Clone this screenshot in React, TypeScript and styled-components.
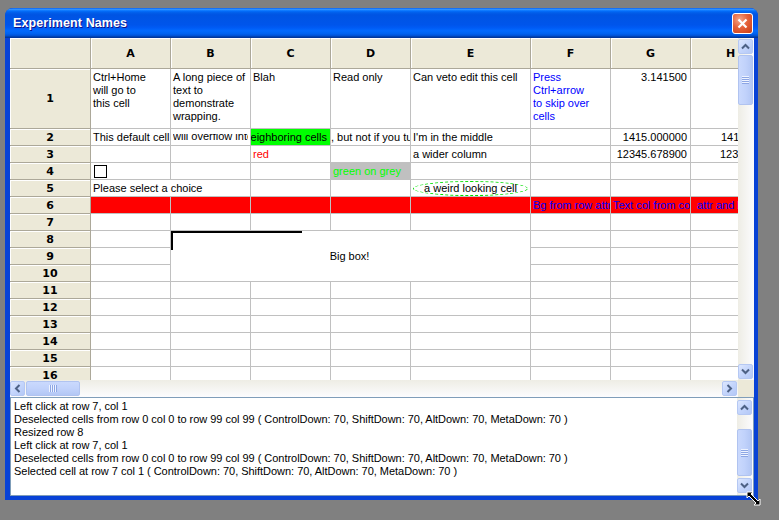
import React from "react";
import styled, { createGlobalStyle } from "styled-components";

const GlobalStyle = createGlobalStyle`
  html, body {
    margin: 0;
    padding: 0;
    background: #808080;
  }
  body {
    font-family: "Liberation Sans", Arial, sans-serif;
  }
`;

const XP_BLUE = "#0842d6";
const GRID_LINE = "#c0c0c0";
const HEADER_BG = "#ece9d8";

const colWidths = [81, 80, 80, 80, 80, 120, 80, 80, 80];
const COLS = ["A", "B", "C", "D", "E", "F", "G", "H"];
const ROW_COUNT = 16;

type Align = "left" | "right" | "center";

interface CellSpec {
  text?: React.ReactNode;
  color?: string;
  bg?: string;
  align?: Align;
  top?: boolean;
  span?: number;
  rowSpan?: number;
  pad?: number;
}

const red = "#ff0000";
const blue = "#0000ff";
const lime = "#00ff00";

const cells: Record<string, CellSpec> = {
  "1,0": { text: "Ctrl+Home\nwill go to\nthis cell", top: true },
  "1,1": { text: "A long piece of\ntext to\ndemonstrate\nwrapping.", top: true },
  "1,2": { text: "Blah", top: true },
  "1,3": { text: "Read only", top: true },
  "1,4": { text: "Can veto edit this cell", top: true },
  "1,5": { text: "Press\nCtrl+arrow\nto skip over\ncells", top: true, color: blue },
  "1,6": { text: "3.141500", top: true, align: "right" },
  "2,0": { text: "This default cell" },
  "2,2": { text: "into neighboring cells", bg: lime, align: "right", pad: 1 },
  "2,3": { text: ", but not if you turn it off", pad: 0 },
  "2,4": { text: "I'm in the middle" },
  "2,6": { text: "1415.000000", align: "right" },
  "2,7": { text: "1415.000000", pad: 30 },
  "3,2": { text: "red", color: red },
  "3,4": { text: "a wider column" },
  "3,6": { text: "12345.678900", align: "right" },
  "3,7": { text: "12345.678900", pad: 29 },
  "4,3": { text: "green on grey", color: lime, bg: "#c0c0c0" },
  "5,0": { text: "Please select a choice", span: 2 },
  "6,0": { bg: red },
  "6,1": { bg: red },
  "6,2": { bg: red },
  "6,3": { bg: red },
  "6,4": { bg: red },
  "6,5": { text: "Bg from row attr", bg: red, color: blue },
  "6,6": { text: "Text col from col attr", bg: red, color: blue },
  "6,7": { text: "attr and bg from row", bg: red, color: blue, pad: 6 },
  "8,1": { text: "Big box!", span: 4, rowSpan: 3, align: "center" },
};

const covered = new Set<string>(["5,1"]);
for (let r = 8; r <= 10; r++) {
  for (let c = 1; c <= 4; c++) {
    if (!(r === 8 && c === 1)) covered.add(`${r},${c}`);
  }
}

const logLines = [
  "Left click at row 7, col 1",
  "Deselected cells from row 0 col 0 to row 99 col 99 ( ControlDown: 70, ShiftDown: 70, AltDown: 70, MetaDown: 70 )",
  "Resized row 8",
  "Left click at row 7, col 1",
  "Deselected cells from row 0 col 0 to row 99 col 99 ( ControlDown: 70, ShiftDown: 70, AltDown: 70, MetaDown: 70 )",
  "Selected cell at row 7 col 1 ( ControlDown: 70, ShiftDown: 70, AltDown: 70, MetaDown: 70 )",
];

const Desktop = styled.div`
  position: relative;
  width: 779px;
  height: 520px;
  padding: 8px 0 0 5px;
  box-sizing: border-box;
  overflow: hidden;
`;

const Window = styled.div`
  width: 753px;
  height: 492px;
  display: flex;
  flex-direction: column;
  background: ${XP_BLUE};
  border-radius: 8px 8px 0 0;
  overflow: hidden;
`;

const TitleBar = styled.div`
  height: 30px;
  flex: none;
  display: flex;
  align-items: center;
  justify-content: space-between;
  padding: 0 5px 0 8px;
  background: linear-gradient(
    to bottom,
    #0058ee 0%,
    #3593ff 4%,
    #288eff 6%,
    #127dff 8%,
    #036ffc 10%,
    #0262ee 14%,
    #0057e5 20%,
    #0054e3 24%,
    #0055eb 56%,
    #005bf5 66%,
    #026afe 76%,
    #0062ef 86%,
    #0052d6 92%,
    #0040ab 96%,
    #003092 100%
  );
`;

const Title = styled.span`
  color: #fff;
  font-family: "Liberation Sans", Arial, sans-serif;
  font-weight: bold;
  font-size: 12.5px;
  text-shadow: 1px 1px 0 #0f1089;
  letter-spacing: 0.1px;
`;

const CloseButton = styled.div`
  width: 21px;
  height: 21px;
  box-sizing: border-box;
  border: 1px solid #fff;
  border-radius: 3px;
  display: flex;
  align-items: center;
  justify-content: center;
  background: radial-gradient(circle at 35% 30%, #f5a689 0%, #e5623a 45%, #c83b14 100%);
`;

const Frame = styled.div`
  flex: 1;
  display: flex;
  flex-direction: column;
  border-style: solid;
  border-color: ${XP_BLUE};
  border-width: 0 4px 4px 5px;
  background: ${HEADER_BG};
  min-height: 0;
`;

const GridPane = styled.div`
  display: grid;
  grid-template-columns: 1fr 16px;
  grid-template-rows: 342px 17px;
  flex: none;
`;

const Viewport = styled.div`
  overflow: hidden;
  background: #fff;
  position: relative;
`;

const Sheet = styled.div`
  display: grid;
  grid-template-columns: ${colWidths.map((w) => `${w}px`).join(" ")};
  grid-template-rows: 31px 60px repeat(${ROW_COUNT - 1}, 17px);
  width: max-content;
  font-size: 11px;
  line-height: 13px;
  color: #000;
`;

const HeaderCell = styled.div<{ $row: number; $col: number }>`
  grid-row: ${(p) => p.$row};
  grid-column: ${(p) => p.$col};
  box-sizing: border-box;
  background: ${HEADER_BG};
  border-right: 1px solid #aca899;
  border-bottom: 1px solid #aca899;
  box-shadow: inset 1px 1px 0 #fff;
  display: flex;
  align-items: center;
  justify-content: center;
  font-family: "DejaVu Sans", Verdana, sans-serif;
  font-weight: bold;
  font-size: 11px;
`;

const Cell = styled.div<{
  $row: number;
  $col: number;
  $span: number;
  $rowSpan: number;
  $bg: string;
  $color: string;
  $align: Align;
  $top: boolean;
  $pad: number;
}>`
  grid-row: ${(p) => p.$row} / span ${(p) => p.$rowSpan};
  grid-column: ${(p) => p.$col} / span ${(p) => p.$span};
  box-sizing: border-box;
  position: relative;
  border-right: 1px solid ${GRID_LINE};
  border-bottom: 1px solid ${GRID_LINE};
  background: ${(p) => p.$bg};
  color: ${(p) => p.$color};
  display: flex;
  align-items: ${(p) => (p.$top ? "flex-start" : "center")};
  justify-content: ${(p) =>
    p.$align === "right" ? "flex-end" : p.$align === "center" ? "center" : "flex-start"};
  padding: ${(p) => (p.$top ? "2px" : "0")} ${(p) => (p.$align === "right" ? 3 : p.$pad)}px 0
    ${(p) => (p.$align === "left" ? p.$pad : 0)}px;
  white-space: ${(p) => (p.$top ? "pre" : "nowrap")};
  overflow: hidden;
  text-align: ${(p) => p.$align};
`;

const ClippedText = styled.span`
  display: block;
  height: 7px;
  overflow: hidden;
  align-self: flex-start;
  margin-top: 5px;
  white-space: nowrap;
  & > span {
    display: block;
    margin-top: -4px;
  }
`;

const CheckBox = styled.span`
  width: 13px;
  height: 13px;
  box-sizing: border-box;
  border: 1px solid #000;
  background: #fff;
  margin-left: 1px;
`;

const Ellipse = styled.span`
  flex: 1;
  height: 15px;
  margin-top: 1px;
  box-sizing: border-box;
  border: 1px dashed #00e000;
  border-radius: 50%;
  display: flex;
  align-items: center;
  justify-content: center;
`;

const CursorMark = styled.span`
  position: absolute;
  left: 0;
  top: 0;
  width: 131px;
  height: 19px;
  box-sizing: border-box;
  border-top: 2px solid #000;
  border-left: 2px solid #000;
`;

const ScrollV = styled.div`
  display: flex;
  flex-direction: column;
  box-sizing: border-box;
  padding: 1px 1px 1px 0;
  background: linear-gradient(to right, #eeede5, #fcfcfe);
  gap: 1px;
`;

const ScrollH = styled.div`
  display: flex;
  box-sizing: border-box;
  padding: 1px 1px 1px 0;
  background: linear-gradient(to bottom, #eeede5, #fcfcfe);
  gap: 1px;
`;

const Corner = styled.div`
  background: ${HEADER_BG};
`;

const ScrollButton = styled.div`
  width: 15px;
  height: 15px;
  flex: none;
  box-sizing: border-box;
  border: 1px solid #b5c8f3;
  border-radius: 2px;
  background: linear-gradient(135deg, #dde7fe 0%, #c4d5fc 50%, #b4c8f6 100%);
  display: flex;
  align-items: center;
  justify-content: center;
`;

const Track = styled.div<{ $vertical?: boolean }>`
  flex: 1;
  display: flex;
  flex-direction: ${(p) => (p.$vertical ? "column" : "row")};
`;

const Thumb = styled.div<{ $vertical?: boolean; $offset: number; $length: number }>`
  box-sizing: border-box;
  flex: none;
  ${(p) =>
    p.$vertical
      ? `height: ${p.$length}px; margin-top: ${p.$offset}px; width: 15px;`
      : `width: ${p.$length}px; margin-left: ${p.$offset}px; height: 15px;`}
  border: 1px solid #b0c3f0;
  border-radius: 2px;
  background: linear-gradient(
    ${(p) => (p.$vertical ? "to right" : "to bottom")},
    #cad9fd 0%,
    #c1d2fb 50%,
    #b3c7f5 100%
  );
  display: flex;
  align-items: center;
  justify-content: center;
`;

const Grip = styled.span<{ $vertical?: boolean }>`
  ${(p) =>
    p.$vertical
      ? `width: 7px; height: 8px;
         background: repeating-linear-gradient(to bottom, #eef3ff 0 1px, #8da6e4 1px 2px);`
      : `width: 8px; height: 7px;
         background: repeating-linear-gradient(to right, #eef3ff 0 1px, #8da6e4 1px 2px);`}
`;

const Spacer = styled.div`
  flex: 1;
`;

const LogPane = styled.div`
  flex: 1;
  display: flex;
  box-sizing: border-box;
  border: 1px solid #7f9db9;
  background: #fff;
  min-height: 0;
`;

const LogText = styled.div`
  flex: 1;
  padding: 2px 3px;
  font-size: 11px;
  line-height: 13px;
  letter-spacing: -0.03px;
  color: #000;
  white-space: pre;
  overflow: hidden;
`;

const LogScroll = styled.div`
  width: 15px;
  display: flex;
  flex-direction: column;
  padding: 2px 1px 2px 0;
  background: linear-gradient(to right, #eeede5, #fcfcfe);
`;

const ResizeCursor = styled.svg`
  position: absolute;
  left: 746px;
  top: 491px;
`;

type Dir = "up" | "down" | "left" | "right";

const Chevron: React.FC<{ dir: Dir }> = ({ dir }) => {
  const rot = { up: 0, right: 90, down: 180, left: 270 }[dir];
  return (
    <svg width="9" height="9" viewBox="0 0 9 9" style={{ transform: `rotate(${rot}deg)` }}>
      <path d="M1 6.5 L4.5 3 L8 6.5" fill="none" stroke="#4d6185" strokeWidth="2" />
    </svg>
  );
};

const App: React.FC = () => {
  const items: React.ReactNode[] = [];

  items.push(<HeaderCell key="corner" $row={1} $col={1} />);
  COLS.forEach((name, c) => {
    items.push(
      <HeaderCell key={`h${c}`} $row={1} $col={c + 2}>
        {name}
      </HeaderCell>
    );
  });

  for (let r = 1; r <= ROW_COUNT; r++) {
    items.push(
      <HeaderCell key={`r${r}`} $row={r + 1} $col={1}>
        {r}
      </HeaderCell>
    );
    for (let c = 0; c < COLS.length; c++) {
      const key = `${r},${c}`;
      if (covered.has(key)) continue;
      const spec = cells[key] || {};
      let content: React.ReactNode = spec.text;
      if (r === 2 && c === 1) {
        content = (
          <ClippedText>
            <span>will overflow into</span>
          </ClippedText>
        );
      }
      if (r === 4 && c === 0) content = <CheckBox />;
      if (r === 5 && c === 4) content = <Ellipse>a weird looking cell</Ellipse>;
      if (r === 8 && c === 1) {
        content = (
          <>
            <CursorMark />
            {spec.text}
          </>
        );
      }
      items.push(
        <Cell
          key={key}
          $row={r + 1}
          $col={c + 2}
          $span={spec.span ?? 1}
          $rowSpan={spec.rowSpan ?? 1}
          $bg={spec.bg ?? "#fff"}
          $color={spec.color ?? "#000"}
          $align={spec.align ?? "left"}
          $top={!!spec.top}
          $pad={spec.pad ?? 2}
        >
          {content}
        </Cell>
      );
    }
  }

  return (
    <>
      <GlobalStyle />
      <Desktop>
        <Window>
          <TitleBar>
            <Title>Experiment Names</Title>
            <CloseButton>
              <svg width="11" height="11" viewBox="0 0 11 11">
                <path d="M1.5 1.5 L9.5 9.5 M9.5 1.5 L1.5 9.5" stroke="#fff" strokeWidth="2.2" />
              </svg>
            </CloseButton>
          </TitleBar>
          <Frame>
            <GridPane>
              <Viewport>
                <Sheet>{items}</Sheet>
              </Viewport>
              <ScrollV>
                <ScrollButton>
                  <Chevron dir="up" />
                </ScrollButton>
                <Track $vertical>
                  <Thumb $vertical $offset={0} $length={50}>
                    <Grip $vertical />
                  </Thumb>
                </Track>
                <ScrollButton>
                  <Chevron dir="down" />
                </ScrollButton>
              </ScrollV>
              <ScrollH>
                <ScrollButton>
                  <Chevron dir="left" />
                </ScrollButton>
                <Thumb $offset={0} $length={54}>
                  <Grip />
                </Thumb>
                <Spacer />
                <ScrollButton>
                  <Chevron dir="right" />
                </ScrollButton>
              </ScrollH>
              <Corner />
            </GridPane>
            <LogPane>
              <LogText>{logLines.join("\n")}</LogText>
              <LogScroll>
                <ScrollButton>
                  <Chevron dir="up" />
                </ScrollButton>
                <Track $vertical>
                  <Thumb $vertical $offset={14} $length={47}>
                    <Grip $vertical />
                  </Thumb>
                </Track>
                <ScrollButton>
                  <Chevron dir="down" />
                </ScrollButton>
              </LogScroll>
            </LogPane>
          </Frame>
        </Window>
        <ResizeCursor width="16" height="16" viewBox="0 0 16 16">
          <polygon
            points="1,1 7,1 5,3 12,10 14,8 14,14 8,14 10,12 3,5 1,7"
            fill="#000"
            stroke="#fff"
            strokeWidth="1"
          />
        </ResizeCursor>
      </Desktop>
    </>
  );
};

export default App;
